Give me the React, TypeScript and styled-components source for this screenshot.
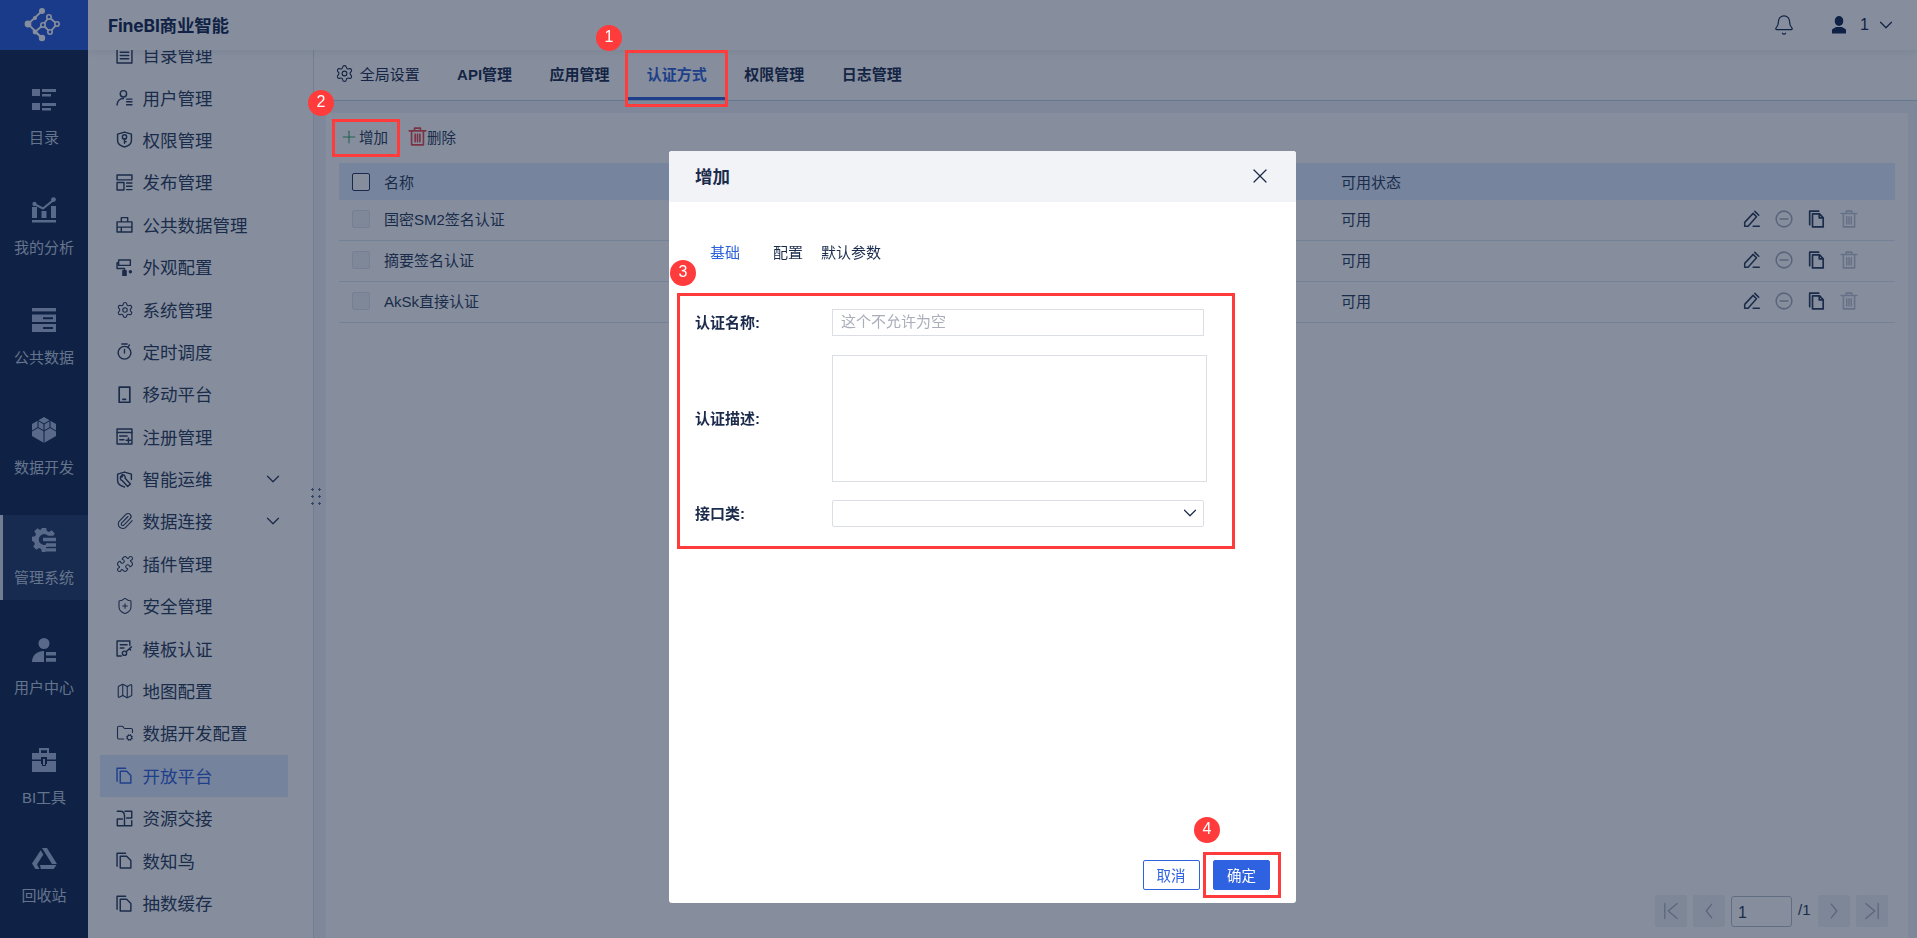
import React from "react";
import styled, { createGlobalStyle } from "styled-components";
import { ChevronDown, X, Plus, Bell, Settings, Paperclip, Puzzle, ShieldPlus, Map as MapIcon, FolderCog } from "lucide-react";

const Global = createGlobalStyle`
  html, body { margin: 0; padding: 0; height: 100%; overflow: hidden; background: #fff; }
  * { box-sizing: border-box; }
  body { font-family: "Liberation Sans", "Noto Sans CJK SC", sans-serif; color: #283858; }
`;

const Page = styled.div`
  display: flex;
  width: 1917px;
  height: 938px;
  overflow: hidden;
`;
const Rail = styled.aside`
  width: 88px;
  flex: none;
  background: #10244c;
  display: flex;
  flex-direction: column;
  position: relative;
  z-index: 3;
`;
const Logo = styled.div`
  height: 50px;
  background: #2656d8;
  display: flex;
  align-items: center;
  justify-content: center;
  flex: none;
  svg { display: block; }
`;
const RailNav = styled.nav`
  display: flex;
  flex-direction: column;
  gap: 25px;
  padding-top: 25px;
`;
const RailItem = styled.div<{ $active?: boolean; $tight?: boolean }>`
  height: 85px;
  flex: none;
  display: flex;
  flex-direction: column;
  align-items: center;
  padding-top: 13px;
  gap: 15px;
  color: #bccadf;
  font-size: 15px;
  line-height: 22px;
  margin-top: ${(p) => (p.$tight ? "-12px" : "0")};
  background: ${(p) => (p.$active ? "#203662" : "transparent")};
  border-left: ${(p) => (p.$active ? "3px solid #d8dde8" : "0")};
  padding-right: ${(p) => (p.$active ? "3px" : "0")};
`;
const RailIcon = styled.div`
  height: 24px;
  display: flex;
  align-items: center;
  justify-content: center;
  svg { display: block; fill: #a2b4d6; }
`;
const Main = styled.div`
  flex: 1;
  min-width: 0;
  display: flex;
  flex-direction: column;
`;
const TopBar = styled.header`
  height: 50px;
  flex: none;
  background: #fff;
  display: flex;
  align-items: center;
  padding: 0 20px 0 20px;
  position: relative;
  z-index: 2;
  box-shadow: 0 2px 8px rgba(30, 50, 90, 0.1);
  > svg { display: block; }
`;
const Brand = styled.div`
  font-family: "Inter", "Noto Sans CJK SC", sans-serif;
  font-size: 17.5px;
  font-weight: 700;
  color: #10244c;
  flex: 1;
  letter-spacing: -0.2px;
  padding-bottom: 2px;
`;
const UserBox = styled.div`
  display: flex;
  align-items: center;
  color: #10244c;
  font-size: 16px;
  margin-left: 36px;
  gap: 6px;
  svg { display: block; }
`;
const UserName = styled.span`
  margin-left: 7px;
`;
const Body = styled.div`
  flex: 1;
  min-height: 0;
  display: flex;
`;
const Sidebar = styled.div`
  width: 226px;
  flex: none;
  border-right: 1px solid #d8dee8;
  position: relative;
`;
const MenuList = styled.ul`
  list-style: none;
  margin: -16px 0 0 12px;
  padding: 0;
  width: 188px;
`;
const MenuRow = styled.li<{ $active?: boolean }>`
  height: 42.4px;
  display: flex;
  align-items: center;
  padding: 0 4px 0 16px;
  gap: 9.5px;
  font-size: 17.5px;
  color: ${(p) => (p.$active ? "#2f62d8" : "#283858")};
  background: ${(p) => (p.$active ? "#dfe8ff" : "transparent")};
  span { flex: 1; white-space: nowrap; padding-bottom: 1px; }
  svg { flex: none; display: block; }
`;
const Grip = styled.div`
  position: absolute;
  left: 220.5px;
  top: 435.5px;
  width: 14px;
  height: 21px;
  background-image: radial-gradient(circle, #5c6c8c 1px, transparent 1.3px);
  background-size: 7px 7px;
  z-index: 1;
`;
const Content = styled.main`
  flex: 1;
  min-width: 0;
  display: flex;
  flex-direction: column;
  background: #eef3f9;
`;
const TabBar = styled.div`
  height: 51px;
  flex: none;
  display: flex;
  padding-left: 2px;
  background: #fff;
  border-bottom: 1px solid #c3d0e4;
`;
const Tab = styled.div<{ $active?: boolean; $plain?: boolean }>`
  height: 50px;
  display: flex;
  align-items: center;
  gap: 6px;
  padding: 0 18.7px;
  font-size: 15px;
  font-weight: ${(p) => (p.$plain ? 400 : 700)};
  color: ${(p) => (p.$active ? "#2f62d8" : "#1b2b4c")};
  border-bottom: 3px solid ${(p) => (p.$active ? "#2f62d8" : "transparent")};
  svg { display: block; }
`;
const Panel = styled.section`
  flex: 1;
  min-height: 0;
  margin: 12px 9px 0 12px;
  background: #fff;
  padding: 0 13px;
  display: flex;
  flex-direction: column;
`;
const Toolbar = styled.div`
  height: 50px;
  flex: none;
  display: flex;
  align-items: center;
  padding-bottom: 3px;
`;
const ToolButton = styled.div<{ $gap: number }>`
  display: flex;
  align-items: center;
  gap: 0;
  font-size: 14.5px;
  margin-right: ${(p) => p.$gap}px;
  svg { display: block; flex: none; }
`;
const TableRow = styled.div<{ $head?: boolean }>`
  display: flex;
  align-items: center;
  flex: none;
  height: ${(p) => (p.$head ? "37px" : "41px")};
  padding: 0 37px ${(p) => (p.$head ? "0" : "4px")} 13px;
  font-size: 15px;
  background: ${(p) => (p.$head ? "#deecff" : "transparent")};
  border-bottom: ${(p) => (p.$head ? "0" : "1px solid #dbe6f7")};
`;
const Check = styled.div<{ $on?: boolean }>`
  width: 18px;
  height: 18px;
  border-radius: 2px;
  flex: none;
  margin-right: 14px;
  margin-top: ${(p) => (p.$on ? "0" : "2px")};
  border: 1px solid ${(p) => (p.$on ? "#22345a" : "#dde3ec")};
  background: ${(p) => (p.$on ? "#fff" : "#f1f3f7")};
`;
const NameCell = styled.div`
  width: 957px;
  flex: none;
`;
const StatusCell = styled.div`
  flex: 1;
`;
const Actions = styled.div`
  display: flex;
  gap: 14.5px;
  margin-top: 1px;
  svg { display: block; }
`;
const DimIcon = styled.span<{ $c: string }>`
  color: ${(p) => p.$c};
  display: block;
`;
const Pager = styled.div`
  margin-top: auto;
  padding: 0 7px 11px 0;
  display: flex;
  justify-content: flex-end;
  align-items: center;
  gap: 6px;
  font-size: 15px;
`;
const PageBtn = styled.div`
  width: 32px;
  height: 32px;
  background: #eef0f4;
  border-radius: 2px;
  display: flex;
  align-items: center;
  justify-content: center;
  color: #a5aebf;
  svg { display: block; }
`;
const PageInput = styled.div`
  width: 61px;
  height: 31px;
  border: 1px solid #b5bdcb;
  border-radius: 3px;
  padding-left: 6px;
  line-height: 31px;
  font-size: 16px;
`;
const PageTotal = styled.div`
  width: 14px;
  white-space: nowrap;
  padding-bottom: 4px;
`;
const Mask = styled.div`
  position: fixed;
  inset: 0;
  z-index: 10;
  background: rgba(14, 30, 60, 0.5);
`;
const Modal = styled.div`
  position: absolute;
  left: 669px;
  top: 151px;
  width: 627px;
  height: 752px;
  background: #fff;
  border-radius: 3px;
  display: flex;
  flex-direction: column;
  overflow: hidden;
  color: #1b2b4c;
`;
const ModalHead = styled.div`
  height: 51px;
  flex: none;
  background: #f2f3f7;
  display: flex;
  align-items: center;
  justify-content: space-between;
  padding: 0 24px 2px 26px;
  font-size: 17.5px;
  font-weight: 700;
  svg { display: block; }
`;
const ModalBody = styled.div`
  flex: 1;
  min-height: 0;
  padding: 38px 26px 0;
  display: flex;
  flex-direction: column;
`;
const DialogTabs = styled.div`
  display: flex;
  gap: 18px;
  padding-left: 15px;
  height: 22px;
  align-items: center;
  font-size: 15px;
  margin-bottom: 47px;
  flex: none;
`;
const DialogTab = styled.div<{ $active?: boolean }>`
  color: ${(p) => (p.$active ? "#2f62d8" : "#1b2b4c")};
  margin-right: ${(p) => (p.$active ? "15px" : "0")};
`;
const Form = styled.div`
  display: flex;
  flex-direction: column;
  gap: 18.5px;
`;
const FormRow = styled.div`
  display: flex;
  align-items: center;
`;
const FormLabel = styled.div`
  width: 137px;
  flex: none;
  font-size: 15px;
  font-weight: 700;
  color: #1b2b4c;
  padding-bottom: 2px;
`;
const TextInput = styled.div`
  width: 372px;
  height: 27px;
  border: 1px solid #dcdee6;
  padding-left: 8px;
  font-size: 15px;
  line-height: 23px;
  color: #a9aeba;
`;
const TextArea = styled.div`
  width: 375px;
  height: 127px;
  border: 1px solid #dcdee6;
`;
const SelectBox = styled.div`
  width: 372px;
  height: 27px;
  border: 1px solid #dcdee6;
  border-radius: 2px;
  display: flex;
  align-items: center;
  justify-content: flex-end;
  padding: 0 2px 2px 0;
  svg { display: block; }
`;
const ModalFoot = styled.div`
  display: flex;
  justify-content: flex-end;
  gap: 13.5px;
  padding: 0 26px 13px;
  flex: none;
`;
const Button = styled.div<{ $primary?: boolean }>`
  width: 57px;
  height: 30px;
  border-radius: 2px;
  border: 1px solid #2f62e0;
  display: flex;
  align-items: center;
  justify-content: center;
  font-size: 14.5px;
  padding-bottom: 2px;
  color: ${(p) => (p.$primary ? "#fff" : "#2f62e0")};
  background: ${(p) => (p.$primary ? "#2f62e0" : "#fff")};
`;
const Badge = styled.div<{ $x: number; $y: number }>`
  position: absolute;
  left: ${(p) => p.$x - 13}px;
  top: ${(p) => p.$y - 13}px;
  width: 26px;
  height: 26px;
  border-radius: 50%;
  background: #ff3b3b;
  color: #fff;
  font-size: 16px;
  text-align: center;
  line-height: 24px;
  z-index: 3;
`;
const Highlight = styled.div<{ $x: number; $y: number; $w: number; $h: number }>`
  position: absolute;
  left: ${(p) => p.$x}px;
  top: ${(p) => p.$y}px;
  width: ${(p) => p.$w}px;
  height: ${(p) => p.$h}px;
  border: 3px solid #ff3b3b;
  z-index: 3;
`;

const S: React.FC<{ children: React.ReactNode; size?: number; w?: number }> = ({ children, size = 17, w = 1.35 }) => (
  <svg width={size} height={size} viewBox="0 0 16 16" fill="none" stroke="currentColor" strokeWidth={w} strokeLinecap="round" strokeLinejoin="round">
    {children}
  </svg>
);

const copyIcon = (
  <S>
    <path d="M1 13.5V1.2h8" />
    <path d="M4 4h6l4 4v7H4z" />
  </S>
);
const Lucide = (I: any) => <I size={18} strokeWidth={1.45} style={{ margin: "0 -0.5px" }} />;

const menu: { t: string; i: React.ReactNode; more?: boolean; active?: boolean }[] = [
  { t: "目录管理", i: <S><rect x="1" y="1" width="14" height="14" /><path d="M4 5h8M4 8h8M4 11h8" /></S> },
  { t: "用户管理", i: <S><circle cx="7" cy="4.5" r="3" /><path d="M1 15c.2-3.5 2.5-6 6-6M10 9.5h5M10 12h5M10 14.8h5" /></S> },
  { t: "权限管理", i: <S><path d="M8 1l6.5 2v6c0 3-3 5.2-6.5 6-3.5-.8-6.5-3-6.5-6V3z" /><circle cx="8" cy="5.6" r="2" /><path d="M8 7.6v4M8 10h1.6" /></S> },
  { t: "发布管理", i: <S><path d="M1 1h14v4.5H1zM1 8h6.5v7H1zM10 8.5h5M10 11.5h5M10 14.7h5" /></S> },
  { t: "公共数据管理", i: <S><path d="M1 5.5h14V15H1zM5 5.5V1.5h6v4M1 10.5h14M5 10.5V15" /></S> },
  { t: "外观配置", i: <S><path d="M2.5 1h11v5h-11zM2.5 3.5H1V9h7v2.5" /><rect x="6.5" y="11" width="3" height="4.5" fill="currentColor" /><circle cx="13.5" cy="12" r="1.6" fill="currentColor" stroke="none" /></S> },
  { t: "系统管理", i: <Settings size={18} strokeWidth={1.45} style={{ margin: "0 -0.5px" }} /> },
  { t: "定时调度", i: <S><circle cx="8" cy="9.2" r="6" /><path d="M8 6v3.4M12.6 1.8l-1.3 2M5.5 1h5" /></S> },
  { t: "移动平台", i: <S w={1.6}><rect x="3" y="1" width="10" height="14.5" /><path d="M6.5 12.5h2.5" /></S> },
  { t: "注册管理", i: <S><rect x="1" y="1" width="14" height="14" /><path d="M1 4.2h14M3.5 7.5h7M3.5 11h4M9.5 11.5h4.5M11.7 9.3v4.4" /></S> },
  { t: "智能运维", more: true, i: <S><path d="M8 1l6.5 2v5M8 1L1.5 3v6c0 3 3 5.2 6.5 6" /><path d="M5 4.5a2.7 2.7 0 0 0 1 4.6l5 5.4 2.6-2.2-5-5.4A2.7 2.7 0 0 0 5.8 3.5v2.2H5z" /></S> },
  { t: "数据连接", more: true, i: Lucide(Paperclip) },
  { t: "插件管理", i: Lucide(Puzzle) },
  { t: "安全管理", i: Lucide(ShieldPlus) },
  { t: "模板认证", i: <S><path d="M13 5V1H1v14h4M4 4.5h6.5M4 7.5h3.5" /><circle cx="8" cy="12.5" r="2" /><path d="M9.5 11l5-4.5M12.5 8.3l1.2 1.2" /></S> },
  { t: "地图配置", i: Lucide(MapIcon) },
  { t: "数据开发配置", i: Lucide(FolderCog) },
  { t: "开放平台", active: true, i: copyIcon },
  { t: "资源交接", i: <S><path d="M8.5 1.2h6.3v6.3H10M1.2 14.8V8.5H6M8 8.5V5.5c0-2.4-1.5-4.3-4-4.3H1.2M8 8v6.8h6.8V10M1.2 14.8H8" /></S> },
  { t: "数知鸟", i: copyIcon },
  { t: "抽数缓存", i: copyIcon },
];

const railIcons: Record<string, React.ReactNode> = {
  list: <svg width="24" height="22" viewBox="0 0 24 22"><path d="M0 0h8v7H0zM10 0h14v3H10zM10 5h9v2.4H10zM0 14h8v7H0zM10 14h14v3H10zM10 19h9v2.4H10z" /></svg>,
  chart: <svg width="24" height="26" viewBox="0 0 24 26"><path d="M0 10h5v11H0zM9.5 14h5v7h-5zM19 9h5v12h-5zM0 23h24v2.4H0z" /><path d="M2 7l9 4.5L21.5 3" fill="none" stroke="#a2b4d6" strokeWidth="2.2" /><circle cx="2.5" cy="7" r="2.2" /><circle cx="21.5" cy="2.6" r="2.4" /></svg>,
  data: <svg width="24" height="24" viewBox="0 0 24 24"><path d="M0 0h24v3.4H0z" /><path fillRule="evenodd" d="M0 6.5h24v7.4H0zM11 9.3v2h10v-2z" /><path fillRule="evenodd" d="M0 16h24v8H0zM11 19v2h10v-2z" /></svg>,
  cube: <svg width="24" height="26" viewBox="0 0 24 26"><path d="M12 0l12 7v12l-12 7-12-7V7z" /><path d="M6 3.5L12 7l6-3.5M12 7v7M6 3.5v7l6 3.5 6-3.5v-7M6 10.5L0 14M18 10.5l6 3.5M12 14v12" fill="none" stroke="#10244c" strokeWidth="1" /></svg>,
  gear: <svg width="24" height="24" viewBox="0 0 24 24"><path fillRule="evenodd" d="M9.8 0h4.4l.6 3 2.3 1 2.6-1.7 3.1 3.1-1.5 2.3H16a5.4 5.4 0 1 0 0 7.6v3.2l-1.8.6-.5 4.9H9.8l-.6-3-2.3-1-2.6 1.7-3.1-3.1L2.9 16l-1-2.3-1.9-.6V8.8l3-.6 1-2.3L2.3 3.3l3.1-3.1L8 1.9l1.3-.6z" /><path d="M11 9.8h13v3.4H11zM14 15.3h10v3.4H14zM14 20.2h10v3.4H14z" /></svg>,
  user: <svg width="24" height="24" viewBox="0 0 24 24"><circle cx="12" cy="5.5" r="5.5" /><path d="M0 24c0-6 4-11 12-11v11zM14 14h10v3.4H14zM14 20h10v3.8H14z" /></svg>,
  tool: <svg width="24" height="24" viewBox="0 0 24 24"><path fillRule="evenodd" d="M7 0h10v5h7v6.5H15V9H9v2.5H0V5h7zm2 2.2V5h6V2.2zM0 13h9v3h6v-3h9v11H0z" /><path d="M10 10h4v8h-4z" fill="#10244c" /><path d="M11 11h2v6h-2z" /></svg>,
  trash: <svg width="25" height="21" viewBox="0 0 25 21"><path d="M10 0h5l10 16h-5zM8.7 2.2l2.6 4.2L5 16.5 7.5 21H3.4L0 15.6zM8 17h16.5L21.6 21H8.8z" /></svg>,
};

const rail: { t: string; i: string; active?: boolean; tight?: boolean }[] = [
  { t: "目录", i: "list" },
  { t: "我的分析", i: "chart" },
  { t: "公共数据", i: "data" },
  { t: "数据开发", i: "cube" },
  { t: "管理系统", i: "gear", active: true },
  { t: "用户中心", i: "user" },
  { t: "BI工具", i: "tool" },
  { t: "回收站", i: "trash", tight: true },
];

const rows = ["国密SM2签名认证", "摘要签名认证", "AkSk直接认证"];

const trashPath = "M1 3.2h14M5.5 3V1h5v2M3 3.5V15h10V3.5M6 6v6.5M8 6v6.5M10 6v6.5";

const RowActions = () => (
  <Actions>
    <S size={18}><path d="M1.5 14.5V11l7.5-8 3 3-7.5 8.5zM10.5 1.2l3.5 3.5M9 14.5h5.5" /></S>
    <DimIcon $c="#a6adbd"><S size={18}><circle cx="8" cy="8" r="7" /><path d="M4.5 8h7" /></S></DimIcon>
    <S size={18} w={1.5}><path d="M1.5 13V1h8M4 15V3.5h6.5l3 3.5v8z" /><path d="M10 3.5V7h3.5" /></S>
    <DimIcon $c="#bcc4d2"><S size={18}><path d={trashPath} /></S></DimIcon>
  </Actions>
);

export default function App() {
  return (
    <>
      <Global />
      <Page>
        <Rail>
          <Logo>
            <svg width="50" height="50" viewBox="0 0 50 50" fill="none" stroke="#fff" strokeWidth="1.8">
              <path d="M23 11L9 24l14 14-7-6 8-7M24 25l7 7 7-8-8-7-6 8" />
              <g fill="#fff" stroke="none">
                <circle cx="23" cy="11" r="3" /><circle cx="9" cy="24" r="3.4" /><circle cx="16" cy="18" r="2" /><circle cx="16" cy="32" r="2.4" /><circle cx="23" cy="38" r="3.2" />
              </g>
              <g fill="#2656d8" strokeWidth="1.6">
                <circle cx="24" cy="25" r="2.2" /><circle cx="30" cy="17" r="2.2" /><circle cx="38" cy="24" r="2.2" /><circle cx="31" cy="32" r="2.2" />
              </g>
            </svg>
          </Logo>
          <RailNav>
            {rail.map((r) => (
              <RailItem key={r.t} $active={r.active} $tight={r.tight}>
                <RailIcon>{railIcons[r.i]}</RailIcon>
                <div>{r.t}</div>
              </RailItem>
            ))}
          </RailNav>
        </Rail>
        <Main>
          <TopBar>
            <Brand>FineBI商业智能</Brand>
            <Bell size={22} strokeWidth={1.3} color="#10244c" />
            <UserBox>
              <svg width="16" height="18" viewBox="0 0 16 18" fill="#10244c"><ellipse cx="8" cy="5" rx="4.3" ry="5" /><path d="M1 17.5v-4l4-2.5h6l4 2.5v4z" /></svg>
              <UserName>1</UserName>
              <ChevronDown size={22} strokeWidth={1.3} />
            </UserBox>
          </TopBar>
          <Body>
            <Sidebar>
              <MenuList>
                {menu.map((m) => (
                  <MenuRow key={m.t} $active={m.active}>
                    {m.i}
                    <span>{m.t}</span>
                    {m.more && <ChevronDown size={22} strokeWidth={1.4} />}
                  </MenuRow>
                ))}
              </MenuList>
              <Grip />
            </Sidebar>
            <Content>
              <TabBar>
                <Tab $plain><Settings size={19} strokeWidth={1.4} />全局设置</Tab>
                <Tab>API管理</Tab>
                <Tab>应用管理</Tab>
                <Tab $active>认证方式</Tab>
                <Tab>权限管理</Tab>
                <Tab>日志管理</Tab>
              </TabBar>
              <Panel>
                <Toolbar>
                  <ToolButton $gap={20}><Plus size={20} strokeWidth={1.3} color="#37a36b" />增加</ToolButton>
                  <ToolButton $gap={0}>
                    <DimIcon $c="#e5484d"><S size={19} w={1.4}><path d={trashPath} /></S></DimIcon>
                    删除
                  </ToolButton>
                </Toolbar>
                <TableRow $head>
                  <Check $on />
                  <NameCell>名称</NameCell>
                  <StatusCell>可用状态</StatusCell>
                </TableRow>
                {rows.map((r) => (
                  <TableRow key={r}>
                    <Check />
                    <NameCell>{r}</NameCell>
                    <StatusCell>可用</StatusCell>
                    <RowActions />
                  </TableRow>
                ))}
                <Pager>
                  <PageBtn><S size={22} w={0.9}><path d="M3.5 2.5v11M12.5 2.5L6 8l6.5 5.5" /></S></PageBtn>
                  <PageBtn><S size={22} w={0.9}><path d="M10 3L6 8l4 5" /></S></PageBtn>
                  <PageInput>1</PageInput>
                  <PageTotal>/1</PageTotal>
                  <PageBtn><S size={22} w={0.9}><path d="M6 3l4 5-4 5" /></S></PageBtn>
                  <PageBtn><S size={22} w={0.9}><path d="M12.5 2.5v11M3.5 2.5L10 8l-6.5 5.5" /></S></PageBtn>
                </Pager>
              </Panel>
            </Content>
          </Body>
        </Main>
      </Page>
      <Mask>
        <Modal>
          <ModalHead>
            增加
            <X size={24} strokeWidth={1.2} />
          </ModalHead>
          <ModalBody>
            <DialogTabs>
              <DialogTab $active>基础</DialogTab>
              <DialogTab>配置</DialogTab>
              <DialogTab>默认参数</DialogTab>
            </DialogTabs>
            <Form>
              <FormRow>
                <FormLabel>认证名称:</FormLabel>
                <TextInput>这个不允许为空</TextInput>
              </FormRow>
              <FormRow>
                <FormLabel>认证描述:</FormLabel>
                <TextArea />
              </FormRow>
              <FormRow>
                <FormLabel>接口类:</FormLabel>
                <SelectBox><ChevronDown size={22} strokeWidth={1.3} /></SelectBox>
              </FormRow>
            </Form>
          </ModalBody>
          <ModalFoot>
            <Button>取消</Button>
            <Button $primary>确定</Button>
          </ModalFoot>
        </Modal>
        <Highlight $x={625} $y={50} $w={103} $h={57} />
        <Highlight $x={332} $y={119} $w={68} $h={38} />
        <Highlight $x={677} $y={293} $w={558} $h={256} />
        <Highlight $x={1203} $y={852} $w={78} $h={46} />
        <Badge $x={609} $y={38}>1</Badge>
        <Badge $x={321} $y={103}>2</Badge>
        <Badge $x={683} $y={273}>3</Badge>
        <Badge $x={1207} $y={830}>4</Badge>
      </Mask>
    </>
  );
}
